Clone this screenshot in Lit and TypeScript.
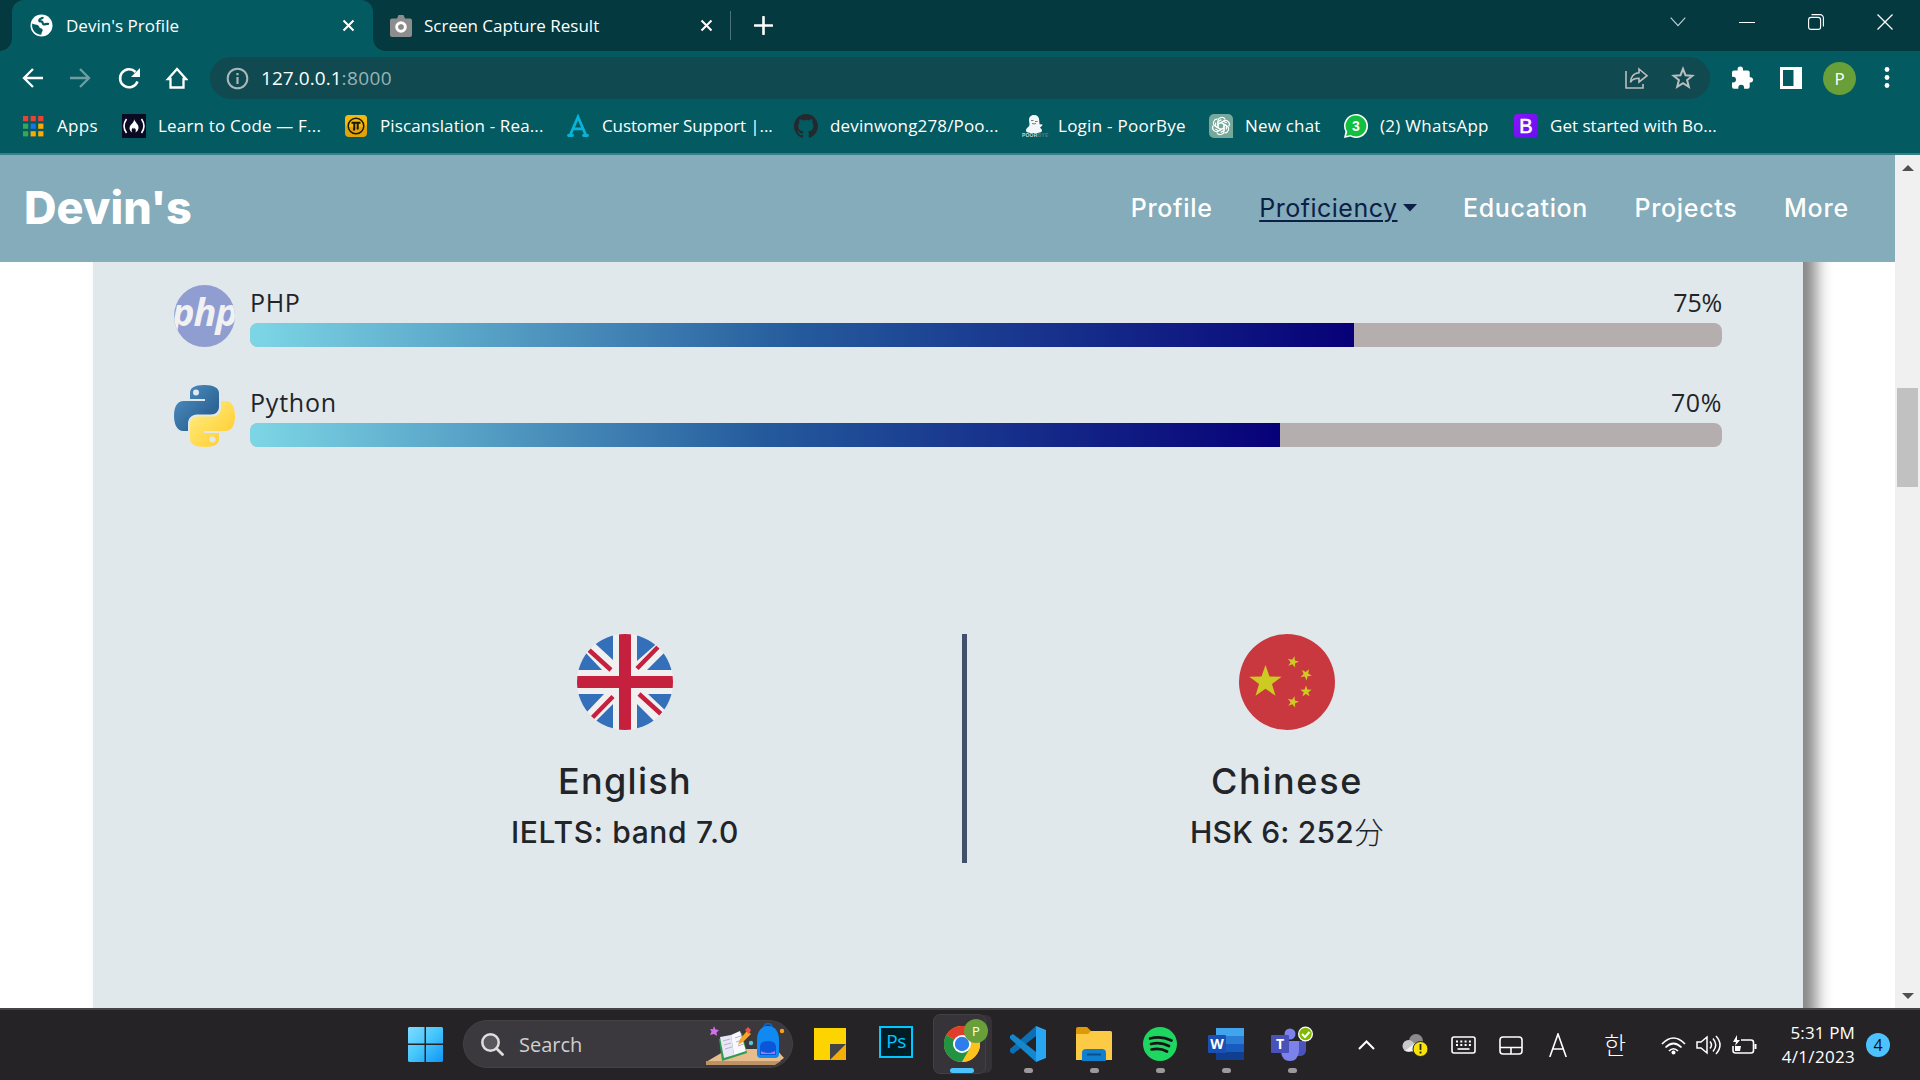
import { LitElement, html, css, svg } from "lit";
import { customElement, property } from "lit/decorators.js";

// Tracking per label, in px.
const SPACING: Record<string, number> = {
  "Devin's Profile": 0.03, "127.0.0.1": 0.05, ":8000": 0.4,
  Apps: 0.3, "Learn to Code — F...": 0.19, "Piscanslation - Rea...": 0.13, "Customer Support |...": -0.12,
  "devinwong278/Poo...": 0.15, "Login - PoorBye": 0.26, "New chat": 0.2, "(2) WhatsApp": 0.28, "Get started with Bo...": 0.02,
  Profile: 0.69, Proficiency: 0.5, Education: 0.62, Projects: 0.69, More: 0.8,
  PHP: 0.6, Python: 0.8, "75%": -0.2, "70%": 0.6,
  English: 1.3, "IELTS: band 7.0": 0.67, Chinese: 1.64, "HSK 6: 252": 0.2,
  "5:31 PM": 0.15, "4/1/2023": 0.3,
};

const t = (text: string, cls = "") =>
  html`<span class="t ${cls}" style="letter-spacing:${SPACING[text] ?? 0}px">${text}</span>`;

const icon = (w: number, h: number, body: unknown, vb = `0 0 ${w} ${h}`) =>
  html`<svg width=${w} height=${h} viewBox=${vb} fill="none">${body}</svg>`;

const star = (cx: number, cy: number, r: number, rot = 0) => {
  const pts = Array.from({ length: 10 }, (_, i) => {
    const a = ((i * 36 - 90 + rot) * Math.PI) / 180;
    const d = i % 2 ? r * 0.4 : r;
    return `${(cx + d * Math.cos(a)).toFixed(2)},${(cy + d * Math.sin(a)).toFixed(2)}`;
  }).join(" ");
  return svg`<polygon points=${pts} fill="#cdcb22"/>`;
};

const closeX = icon(13, 13, svg`<path d="M1.5 1.5 11.5 11.5M11.5 1.5 1.5 11.5" stroke="#fff" stroke-width="2"/>`);

const bookmarkIcons = {
  apps: icon(24, 24, [0, 1, 2].map((r) => [0, 1, 2].map((c) => {
    const col = [["#ea4335", "#ea4335", "#ea4335"], ["#34a853", "#1a73e8", "#fbab04"], ["#34a853", "#fbab04", "#fbab04"]][r][c];
    return svg`<rect x=${2 + c * 7.6} y=${2 + r * 7.6} width="5.2" height="5.2" fill=${col}/>`;
  }))),
  fcc: icon(24, 24, svg`<rect width="24" height="24" fill="#0a0a23"/><path d="M4.500 5Q-.5 12 4.500 19M19.500 5q5 7 0 14" stroke="#fff" stroke-width="1.600"/><path d="M12 5c.5 3 5 5 4.500 9-.3 2.600-1.800 3.800-3 4.500.8-2.500.2-3.500-1-4.500-.3 1.300-1.400 1-1.300-.6-2 1.500-2 3.600-.8 5.100-2-.8-3.200-2.800-2.800-5C8.200 10 12.500 9 12 5z" fill="#fff"/>`),
  pi: icon(24, 24, svg`<rect x="1" y="1" width="22" height="22" rx="4" fill="#e0a30b"/><rect x="1" y="1" width="22" height="12" rx="4" fill="#f4b90f"/><circle cx="12" cy="12" r="7.800" stroke="#1c1604" stroke-width="1.500"/><path d="M7.500 8.700h9M10.300 9v6.500M13.700 9v6.500M9 15.500h2" stroke="#1c1604" stroke-width="2"/>`),
  a: icon(24, 24, svg`<path d="M2.500 21.500h4M17.500 21.500h4M4.200 21 12 3l7.800 18M7 14.800h10" stroke="#06b4d8" stroke-width="2.800" stroke-linecap="round"/>`),
  git: icon(24, 24, svg`<path fill="#24292f" d="M12 0C5.370 0 0 5.500 0 12.200c0 5.400 3.400 10 8.200 11.600.6.100.8-.3.800-.6v-2.100c-3.300.7-4-1.600-4-1.600-.6-1.400-1.400-1.800-1.400-1.800-1-.7.1-.7.100-.7 1.200.1 1.800 1.200 1.800 1.200 1.100 1.900 2.800 1.300 3.500 1 .1-.8.400-1.300.8-1.600-2.700-.3-5.500-1.300-5.500-6 0-1.300.5-2.400 1.200-3.200-.1-.3-.5-1.600.1-3.200 0 0 1-.3 3.300 1.200a11 11 0 0 1 6 0c2.300-1.600 3.300-1.200 3.300-1.200.6 1.600.2 2.900.1 3.200.8.800 1.200 1.900 1.200 3.200 0 4.700-2.800 5.700-5.500 6 .5.4.8 1.100.8 2.200v3.400c0 .3.200.7.800.6A12.200 12.200 0 0 0 24 12.200C24 5.500 18.600 0 12 0z"/>`),
  bye: html`<div class="bye">${icon(24, 19, svg`<path d="M12 1c-3.500 0-5 2.500-5 5 0 2 .8 3.300.3 5.500C6.500 13.500 4 14 4 16.500 4 18.500 7 19 12 19s8-.5 8-2.500c0-1.800-1.500-2-2-3 1-.6 2.300-1.500 2.600-3l-3-.2C17.500 9 17.200 8 17.200 6c0-3-1.800-5-5.200-5z" fill="#f4f7f8"/><path d="M9 6.500h2.500M13 7.500h2.500M10 9.500q2 .8 4 0" stroke="#6a8085" stroke-width="1"/>`)}<i>POOR<b>BYE</b></i></div>`,
  gpt: icon(24, 24, svg`<path d="M5 0h14a5 5 0 0 1 5 5v19H5a5 5 0 0 1-5-5V5a5 5 0 0 1 5-5z" fill="#75a99c"/>${[0, 60, 120, 180, 240, 300].map((a) => svg`<path transform="rotate(${a} 12 12)" d="M9 13.800V7.300c0-4.400 6-5.200 7.200-1.700M9 10.200l5.300-3.100 3.400 2" stroke="#fff" stroke-width="1.200"/>`)}`),
  wa: html`<div class="wa">${icon(24, 24, svg`<path d="M12 0a12 12 0 1 1-5.600 22.600L0 24l1.400-6.400A12 12 0 0 1 12 0z" fill="#fff"/><path d="M12 1.600a10.400 10.400 0 1 1-5.400 19.300l-4.500 1.200 1.200-4.400A10.400 10.400 0 0 1 12 1.600z" fill="#12bf3f"/>`)}<b>3</b></div>`,
  bs: html`<div class="bs">B</div>`,
};

@customElement("browser-chrome")
export class BrowserChrome extends LitElement {
  static styles = css`
    :host { display: block; font-family: "Open Sans", "Noto Sans", sans-serif; color: #fff; font-size: 17px; }
    svg { display: block; flex: none; }
    .t { white-space: nowrap; }
    .tabs { height: 51px; background: #03393f; display: flex; align-items: center; padding-left: 12px; box-sizing: border-box; }
    .tab { height: 51px; width: 361px; box-sizing: border-box; padding: 0 18px; display: flex; align-items: center; gap: 13px; position: relative; }
    .tab .t { flex: 1; }
    .on { background: #045a61; border-radius: 12px 12px 0 0; }
    .on::before, .on::after { content: ""; position: absolute; bottom: 0; width: 12px; height: 12px; }
    .on::before { left: -12px; background: radial-gradient(circle at 0 0, transparent 11.500px, #045a61 12px); }
    .on::after { right: -12px; background: radial-gradient(circle at 100% 0, transparent 11.500px, #045a61 12px); }
    .off { width: 357px; padding: 0 17px; gap: 12px; }
    .sep { width: 1px; height: 29px; background: #4b7377; }
    .plus { margin-left: 23px; }
    .win { margin-left: auto; display: flex; gap: 53px; align-items: center; padding: 0 27px 8px 0; }
    .bar { height: 53px; background: #045a61; display: flex; align-items: center; box-sizing: border-box; padding: 1px 0 0 20px; }
    .nav { display: flex; gap: 24px; width: 190px; flex: none; }
    .omni { width: 1500px; flex: none; height: 42px; border-radius: 21px; background: #104950; display: flex; align-items: center; box-sizing: border-box; padding: 0 15px 0 16px; font-size: 19px; }
    .url { flex: 1; margin-left: 12px; white-space: nowrap; }
    .port { color: #9ab3b6; }
    .acts { display: flex; gap: 23px; }
    .ext { display: flex; align-items: center; flex: none; padding-left: 21px; gap: 24px; }
    .ava { width: 33px; height: 33px; flex: none; border-radius: 50%; background: #689f38; display: grid; place-items: center; font-size: 17px; margin-left: -4px; }
    .dots { margin-left: 2px; }
    .marks { height: 51px; box-sizing: border-box; background: #045a61; border-bottom: 2px solid #3a7f86; padding: 0 0 5px 21px; display: grid; align-items: center; grid-template-columns: 101px 222px 222px 228px 228px 187px 135px 170px 300px; }
    .mark { display: flex; align-items: center; gap: 12px; }
    .mark .t { margin-top: -2px; }
    .bye { width: 24px; height: 24px; }
    .bye i { display: block; font: 700 5px/5px "Liberation Sans", sans-serif; letter-spacing: 0.2px; color: #c6d6d8; white-space: nowrap; }
    .bye b { color: #5b7f84; }
    .wa { display: grid; width: 24px; height: 24px; place-items: center; }
    .wa > * { grid-area: 1 / 1; }
    .wa b { font: 700 14px "Liberation Sans", sans-serif; }
    .bs { width: 24px; height: 24px; border-radius: 4px; background: linear-gradient(135deg, #8a12fb, #6610f2); font: 400 20px/24px "Liberation Sans", sans-serif; -webkit-text-stroke: 0.6px #fff; text-align: center; }
  `;
  render() {
    const m = (k: keyof typeof bookmarkIcons, s: string) => html`<div class="mark">${bookmarkIcons[k]}${t(s)}</div>`;
    return html`
      <div class="tabs">
        <div class="tab on">
          ${icon(23, 23, svg`<circle cx="11.500" cy="11.500" r="11" fill="#fff"/><path d="M13 3.200c-.5 1.600-3.500 1-3.700 3-.1 1.700 1.800 1 2.800 1.500 1 .6 0 2.200 1.500 2.700 1.500.4 2.700-1.200 5.400-.4" stroke="#045a61" stroke-width="2.200"/><path d="M2.300 9.500c2.500 1.300 5.700.8 6.700 2.800.6 1.200.3 1.700 1.700 2 2.300.6 2.300 2 1.300 3.700-.6 1.100-.6 2-.7 2.800A9.300 9.300 0 0 1 2.300 9.500z" fill="#045a61"/>`)}
          ${t("Devin's Profile")}${closeX}
        </div>
        <div class="tab off">
          ${icon(22, 22, svg`<path d="M7 3.500 8.500 0h5L15 3.500h5a2 2 0 0 1 2 2V20a2 2 0 0 1-2 2H2a2 2 0 0 1-2-2V5.500a2 2 0 0 1 2-2z" fill="#8d8d8d"/><circle cx="11" cy="12" r="4.300" stroke="#fff" stroke-width="3"/><circle cx="11" cy="12" r="2.500" fill="#8a8a8a"/>`)}
          ${t("Screen Capture Result")}${closeX}
        </div>
        <div class="sep"></div>
        <div class="plus">${icon(19, 19, svg`<path d="M9.500 1v17M1 9.500h17" stroke="#fff" stroke-width="2.600" stroke-linecap="round"/>`)}</div>
        <div class="win">
          ${icon(16, 10, svg`<path d="m.7.700 7.300 8 7.300-8" stroke="#c5d3d4" stroke-width="1.100"/>`)}
          ${icon(16, 16, svg`<path d="M0 8.500h16" stroke="#fff"/>`)}
          ${icon(16, 16, svg`<rect x=".6" y="3.400" width="12" height="12" rx="2.500" stroke="#fff" stroke-width="1.100"/><path d="M3.500.6h8.500a3.300 3.300 0 0 1 3.400 3.400v8.500" stroke="#fff" stroke-width="1.100"/>`)}
          ${icon(16, 16, svg`<path d="m.5.500 15 15M15.500.500l-15 15" stroke="#fff" stroke-width="1.300"/>`)}
        </div>
      </div>
      <div class="bar">
        <div class="nav">
          ${icon(24, 24, svg`<path d="M23 12H5M13 3l-9 9 9 9" stroke="#fff" stroke-width="2.300"/>`)}
          ${icon(24, 24, svg`<path d="M2 12h18M12 3l9 9-9 9" stroke="#6e9ea2" stroke-width="2.300"/>`)}
          ${icon(24, 24, svg`<path d="M21.500 15.500A9 9 0 1 1 19.500 6" stroke="#fff" stroke-width="2.500"/><path d="M24 2v9h-9z" fill="#fff"/>`)}
          ${icon(24, 24, svg`<path d="M6.500 21.500V13H4l9-10 9 10h-2.500v8.500z" stroke="#fff" stroke-width="2.300"/>`)}
        </div>
        <div class="omni">
          ${icon(23, 23, svg`<circle cx="11.500" cy="11.500" r="9.800" stroke="#a9b8ba" stroke-width="2"/><path d="M11.500 10v7M11.500 6v2.300" stroke="#a9b8ba" stroke-width="2.200"/>`)}
          <span class="url">${t("127.0.0.1")}${t(":8000", "port")}</span>
          <div class="acts">
            ${icon(24, 24, svg`<path d="M2 5v17h17v-4" stroke="#b9bebf" stroke-width="1.600"/><path d="M15 3l8 6.700-8 6.300v-3.700c-4 0-7 1-8.500 4 0-5 3-9.300 8.500-9.600z" stroke="#b9bebf" stroke-width="1.600"/>`)}
            ${icon(24, 24, svg`<path d="m12 2.800 2.500 6.400 6.900.5-5.300 4.400 1.700 6.700L12 17.100l-5.800 3.700 1.700-6.700-5.300-4.400 6.900-.5z" stroke="#b9bebf" stroke-width="2"/>`)}
          </div>
        </div>
        <div class="ext">
          ${icon(24, 24, svg`<path d="M20 11.200h-1.300V6.400a2 2 0 0 0-2-2H12V3.200a2.700 2.700 0 0 0-5.400 0v1.200H3a2 2 0 0 0-2 2v4.300h1.100a2.900 2.900 0 0 1 0 5.800H1v4.300a2 2 0 0 0 2 2h4.300v-1.100a2.900 2.900 0 0 1 5.800 0v1.100h3.600a2 2 0 0 0 2-2v-4.300H20a2.700 2.700 0 0 0 0-5.300z" fill="#fff"/>`)}
          ${icon(24, 24, svg`<path d="M1 1h22v22H1zM4 4v16h10.500V4z" fill="#fff" fill-rule="evenodd"/>`)}
          <div class="ava">P</div>
          <div class="dots">${icon(10, 24, svg`<circle cx="5" cy="3.500" r="2.400" fill="#fff"/><circle cx="5" cy="11.500" r="2.400" fill="#fff"/><circle cx="5" cy="19.500" r="2.400" fill="#fff"/>`)}</div>
        </div>
      </div>
      <div class="marks">
        ${m("apps", "Apps")}${m("fcc", "Learn to Code — F...")}${m("pi", "Piscanslation - Rea...")}${m("a", "Customer Support |...")}
        ${m("git", "devinwong278/Poo...")}${m("bye", "Login - PoorBye")}${m("gpt", "New chat")}${m("wa", "(2) WhatsApp")}${m("bs", "Get started with Bo...")}
      </div>`;
  }
}

@customElement("skill-row")
export class SkillRow extends LitElement {
  @property() name = "";
  @property({ type: Number }) value = 0;
  static styles = css`
    :host { display: flex; gap: 15px; height: 62px; margin-bottom: 38px; font: 400 25px/34px "Open Sans", "Noto Sans", sans-serif; color: #212529; }
    .logo { width: 61px; height: 62px; flex: none; }
    .body { flex: 1; }
    .head { display: flex; justify-content: space-between; height: 38px; }
    .track { height: 24px; border-radius: 8px; background: #b4afae; overflow: hidden; }
    .fill { height: 100%; background: linear-gradient(to right, #7dd6e5, #245a9c 50%, #070078); }
  `;
  render() {
    return html`<div class="logo"><slot></slot></div>
      <div class="body">
        <div class="head">${t(this.name)}${t(this.value + "%")}</div>
        <div class="track"><div class="fill" style="width:${this.value}%"></div></div>
      </div>`;
  }
}

@customElement("profile-page")
export class ProfilePage extends LitElement {
  static styles = css`
    :host { display: grid; grid-template-columns: 1895px 25px; height: 853px; background: #fff; font-family: Inter, "Open Sans", sans-serif; color: #212529; }
    svg { display: block; }
    .t { white-space: nowrap; }
    .view { overflow: hidden; height: 853px; }
    .navbar { height: 107px; background: #84acba; display: flex; align-items: center; justify-content: space-between; box-sizing: border-box; padding: 0 46px 2px 24px; position: relative; z-index: 1; color: #fff; }
    .brand { font-size: 45px; font-weight: 800; }
    .links { display: flex; font-size: 25px; font-weight: 500; gap: 46.500px; }
    .drop { color: #0c2047; font-weight: 400; display: flex; align-items: center; gap: 5px; }
    .drop .t { text-decoration: underline; text-decoration-thickness: 2px; text-underline-offset: 3px; }
    .panel { height: 826px; width: 1710px; margin: -40px 0 0 93px; background: #e1e8eb; box-shadow: 13px 0 15px #858585; box-sizing: border-box; padding: 63px 81px 0; }
    .php { width: 61px; height: 62px; border-radius: 50%; overflow: hidden; background: #8f9dd1; color: #f1f1f2; font: italic 700 38px/53px "Open Sans", sans-serif; display: flex; justify-content: center; letter-spacing: -1px; }
    .langs { display: grid; grid-template-columns: 674px 5px 640px; margin: 187px 0 0 114px; height: 229px; }
    .lang { display: flex; flex-direction: column; align-items: center; }
    .rule { background: #41516a; }
    .name { font-size: 36px; line-height: 42px; margin-top: 30px; font-weight: 500; }
    .score { font-size: 30px; line-height: 36px; margin-top: 12px; font-weight: 500; display: flex; }
    .cjk { font-family: "Noto Sans CJK SC", sans-serif; font-weight: 300; margin-top: -2px; }
    .scroll { background: #f0f0f0; display: flex; flex-direction: column; align-items: center; box-sizing: border-box; padding: 10px 0 9px; }
    .thumb { width: 21px; height: 99px; background: #c1c1c1; margin: 217px 0 auto; }
  `;
  render() {
    const flagGB = icon(96, 96, svg`<defs><clipPath id="c"><circle cx="48" cy="48" r="48"/></clipPath></defs><g clip-path="url(#c)"><rect width="96" height="96" fill="#f1f0f1"/>
      <path fill="#3470ba" d="M36 0v26L17 8.500zM60 0v27L81 8.500zM0 36h25L8 18zM96 36H70L88 18zM0 60h27L8 80zM96 60H71L90 78zM36 96V70L18 88zM60 96V70L78 88z"/>
      <path fill="#c6203f" d="M42 0h12v42h42v12H54v42H42V54H0V42h42z"/><path d="M12 16 34 36M82 12 60 34.500M15 84 36 62.500M84 80 62 60" stroke="#c6203f" stroke-width="4.500"/></g>`);
    const flagCN = icon(96, 96, svg`<circle cx="48" cy="48" r="48" fill="#c9383f"/>${star(26.500, 48, 17)}${star(54, 28, 6, 15)}${star(67, 40.500, 6, 30)}${star(67, 57.500, 6)}${star(54, 68, 6, 15)}`);
    const python = icon(61, 62, svg`<defs><linearGradient id="b" x1="0" y1="0" x2="1" y2="1"><stop stop-color="#4f94c8"/><stop offset=".7" stop-color="#2f6596"/></linearGradient><linearGradient id="y" x1="0" y1="0" x2="1" y2="1"><stop offset=".2" stop-color="#ffe873"/><stop offset=".8" stop-color="#ffd13a"/></linearGradient></defs>
      <path fill="url(#b)" fill-rule="evenodd" d="M30.400 0C20 0 16 3 16 8v6h15v2H9.500C3.500 16 0 21.500 0 31s4 15 9 15h5v-7c0-6 4-9.500 9-9.500h14c5 0 8-3.500 8-8V8c0-5-5-8-14.600-8zM22 4.500a3 3 0 1 1 0 6 3 3 0 0 1 0-6z"/>
      <path fill="url(#y)" fill-rule="evenodd" d="M30.600 62C41 62 45 59 45 54v-6H30v-2h21.500C57.500 46 61 40.500 61 31s-4-15-9-15h-5v7c0 6-4 8.500-9 8.500H24c-5 0-8 3.500-8 8V54c0 5 5 8 14.600 8zM38.500 51.500a3 3 0 1 1 0 6 3 3 0 0 1 0-6z"/>`);
    return html`<div class="view">
        <div class="navbar">${t("Devin's", "brand")}
          <div class="links">${t("Profile")}<span class="drop">${t("Proficiency")}${icon(14, 8, svg`<path d="M0 0h14L7 7.500z" fill="#0c2047"/>`)}</span>${t("Education")}${t("Projects")}${t("More")}</div>
        </div>
        <div class="panel">
          <skill-row name="PHP" value="75"><div class="php">php</div></skill-row>
          <skill-row name="Python" value="70">${python}</skill-row>
          <div class="langs">
            <div class="lang">${flagGB}<div class="name">${t("English")}</div><div class="score">${t("IELTS: band 7.0")}</div></div>
            <div class="rule"></div>
            <div class="lang">${flagCN}<div class="name">${t("Chinese")}</div><div class="score">${t("HSK 6: 252")}<span class="cjk">分</span></div></div>
          </div>
        </div>
      </div>
      <div class="scroll">
        ${icon(12, 6, svg`<path d="m0 6 6-6 6 6z" fill="#505050"/>`)}
        <div class="thumb"></div>
        ${icon(12, 6, svg`<path d="m0 0 6 6 6-6z" fill="#505050"/>`)}
      </div>`;
  }
}

@customElement("task-bar")
export class TaskBar extends LitElement {
  static styles = css`
    :host { display: flex; align-items: center; height: 72px; box-sizing: border-box; border-top: 2px solid #444446; background: #262327; color: #fff; font-family: "Open Sans", "Noto Sans", sans-serif; padding: 0 10px 0 408px; }
    svg { display: block; }
    .t { white-space: nowrap; }
    .start { margin-top: -1px; }
    .search { margin: -2px 0 0 20px; width: 330px; height: 48px; border-radius: 24px; background: #3b393d; border: 1px solid #434145; box-sizing: border-box; display: flex; align-items: center; padding: 0 6px 0 17px; gap: 15px; font-size: 20px; color: #cfcfd0; }
    .search .art { margin-left: auto; }
    .apps { display: grid; grid-template-columns: repeat(8, 66px); margin-left: 4px; height: 70px; }
    .app { display: grid; grid-template-rows: 48px 5px; align-content: start; justify-items: center; align-items: center; padding-top: 10px; }
    .app i { width: 9px; height: 5px; border-radius: 3px; background: #9b999c; }
    .cur { position: relative; }
    .cur::before { content: ""; position: absolute; left: 4px; top: 4px; width: 51px; height: 58px; border: 1px solid #424045; border-radius: 7px; background: #363438; box-shadow: 7px 0 0 -1px #343236; }
    .cur > * { position: relative; }
    .cur i { width: 24px; background: #4cc2ff; }
    .ps { width: 34px; height: 32px; margin-top: -4px; box-sizing: border-box; border: 2px solid #00c8ff; background: #001d26; color: #00c8ff; font-size: 19px; line-height: 26px; text-align: center; letter-spacing: -0.500px; }
    .stack { display: grid; }
    .stack > * { grid-area: 1 / 1; }
    .chrome { width: 36px; height: 36px; }
    .pb { width: 24px; height: 24px; border-radius: 50%; background: #689f38; font-size: 13px; line-height: 24px; text-align: center; margin: -7px 0 0 20px; }
    .w { width: 18px; height: 18px; background: #1a4fb4; font: 700 14px/18px "Open Sans", sans-serif; text-align: center; margin-top: 7px; border-radius: 1px; }
    .tm { background: #4a51b8; margin-top: 9px; }
    .tray { display: grid; align-items: center; margin-left: auto; grid-template-columns: 44px 49px 48px 50px 55px 57px 35px 36px 37px 86px 55px; }
    .a { font-family: "Noto Sans CJK KR", sans-serif; font-weight: 300; font-size: 24px; line-height: 30px; margin-top: -3px; }
    .clock { font-size: 17px; line-height: 24px; text-align: right; display: grid; justify-items: end; }
    .n { width: 24px; height: 24px; border-radius: 50%; background: #4cc2ff; color: #111; font-size: 16px; line-height: 24px; text-align: center; margin-left: 11px; margin-top: -1px; }
  `;
  render() {
    const app = (body: unknown, run = true, cls = "") => html`<div class="app ${cls}">${body}${run ? html`<i></i>` : ""}</div>`;
    return html`
      <div class="start">${icon(35, 35, svg`<defs><linearGradient id="g" gradientUnits="userSpaceOnUse" x1="0" y1="0" x2="35" y2="35"><stop stop-color="#7fdcff"/><stop offset=".5" stop-color="#45c5fb"/><stop offset="1" stop-color="#1194f5"/></linearGradient></defs><path fill="url(#g)" d="M1 0h15.500v16.500H0V1zM18 0H34l1 1v15.500H18zM0 18h16.500V35H1l-1-1zM18 18H35V34l-1 1H18z"/>`)}</div>
      <div class="search">
        ${icon(23, 23, svg`<circle cx="9.500" cy="9.500" r="8.200" stroke="#dedede" stroke-width="2.500" fill="#59575b"/><path d="m15.500 15.500 6 6" stroke="#dedede" stroke-width="2.800" stroke-linecap="round"/>`)}
        ${t("Search")}
        <div class="art">${icon(80, 42, svg`<path d="M0 39 22 26h48l8 9-7 5z" fill="#e7bd8c"/><path d="M0 38h75l-6 4H0z" fill="#bd9266"/><path d="m13 16 23-6 5 20-25 8z" fill="#2f9b55"/><path d="m14 14 11-2 3 20-10 3z" fill="#e9e6f5"/><path d="m25 12 9-4 6 20-12 4z" fill="#f9f7ff"/><path d="m17 18 7-2m-6 6 7-2m-6 6 7-2m3-9 6-2m-5 6 6-2m-4 6 6-2" stroke="#b7b1cf" stroke-width="1"/><path d="m32 22 2-6 7-8 4 3-8 8z" fill="#f7a62b"/><path d="m39 7 3-3 3 3-2 4z" fill="#ee5146"/><path d="M8 3l1.500 3.500 3.500.5-2.500 2.500.5 3.500-3-2-4 1 1.500-3.500L4 6l3 .3z" fill="#d76df2"/><circle cx="45" cy="20" r="2.200" fill="#54c5d4"/><circle cx="76" cy="8" r="2.200" fill="#f5a316"/><path d="M58 5c0-6 8-6 8 0" stroke="#0d62c4" stroke-width="2"/><path d="M51 17C51 9 55 3 62 3s11 6 11 14v14q0 4-4 4H55q-4 0-4-4z" fill="#1089f3"/><path d="M54 24q0-6 8-6t8 6v8H54z" fill="#0b55d8"/><path d="M55 28q7 4 14 0v3H55z" fill="#a776f5"/>`)}</div>
      </div>
      <div class="apps">
        ${app(icon(32, 32, svg`<path d="M0 0h32v16L16 32H0z" fill="#fdd400"/><path d="M16 16h16L16 32z" fill="#444"/><path d="M32 16v16H16z" fill="#f4ae0a"/>`), false)}
        ${app(html`<div class="ps">Ps</div>`, false)}
        ${app(html`<div class="stack chrome">${icon(36, 36, svg`<circle cx="18" cy="18" r="18" fill="#fcc31e"/><path d="M18 18 2.400 9A18 18 0 0 1 33.600 9z" fill="#e33b2e"/><path d="M18 18 2.400 9A18 18 0 0 0 18 36l8-13z" fill="#229342"/><path d="M18 9h15.600A18 18 0 0 1 18 36l8-14z" fill="#fcc31e"/><circle cx="18" cy="18" r="9" fill="#fff"/><circle cx="18" cy="18" r="7.200" fill="#2f7ded"/>`)}<div class="pb">P</div></div>`, true, "cur")}
        ${app(icon(36, 36, svg`<path d="M26 0 0 23v3l3 2 23-18z" fill="#0b6fb5"/><path d="m26 36-26-23.500V10l3-2 23 18z" fill="#1487cf"/><path d="m26 0 10 4v28l-10 4z" fill="#29a5f2"/>`))}
        ${app(icon(36, 34, svg`<path d="M0 2q0-2 2-2h9l4 4h19q2 0 2 2v8H0z" fill="#dd9a07"/><path d="M0 7h12l3-3h19q2 0 2 2v27H0z" fill="#fdca45"/><path d="M6 34V26q0-4 4-4h16q4 0 4 4v8z" fill="#107fce"/><path d="M11 27.500h14" stroke="#0b4f8b" stroke-width="2"/>`))}
        ${app(icon(34, 34, svg`<circle cx="17" cy="17" r="17" fill="#1ed760"/><path d="M7 11.500q11-3 21.500 2M8 17q9.500-2.500 18 2M8.500 22.500q8.500-2 15.500 2" stroke="#161616" stroke-width="2.700" stroke-linecap="round"/>`))}
        ${app(html`<div class="stack">${icon(36, 32, svg`<path fill="#41a5ee" d="M8 0h28v8H8z"/><path fill="#2b7cd3" d="M8 8h28v8H8z"/><path fill="#185abd" d="M8 16h28v8H8z"/><path fill="#103f91" d="M8 24h28v8H8z"/>`)}<div class="w">W</div></div>`)}
        ${app(html`<div class="stack">${icon(42, 36, svg`<circle cx="19" cy="8" r="5.500" fill="#7b83eb"/><path d="M25 15h10v10q-1 5-6 5h-4z" fill="#4b53bc"/><path d="M10 15h18v10q-1 10-9 10t-9-9z" fill="#7b83eb"/><circle cx="34.500" cy="8" r="7.500" fill="#fff"/><circle cx="34.500" cy="8" r="6.200" fill="#7fba00"/><path d="m31 8 3 3 4.500-5" stroke="#fff" stroke-width="2"/>`)}<div class="w tm">T</div></div>`)}
      </div>
      <div class="tray">
        ${icon(17, 10, svg`<path d="m1 9 7.500-7.500L16 9" stroke="#fff" stroke-width="2"/>`)}
        ${icon(26, 24, svg`<circle cx="14" cy="8" r="7" fill="#8b8b8b"/><circle cx="6.500" cy="13" r="6" fill="#c9c9c9"/><path d="M3 18l10-8 6 9z" fill="#f3f3f3"/><circle cx="18.500" cy="16" r="7.500" fill="#fbe10a" stroke="#262327"/><path d="M18.500 11v6M18.500 18.500v2" stroke="#222" stroke-width="1.800"/>`)}
        ${icon(25, 18, svg`<rect x="1" y="1" width="23" height="16" rx="2" stroke="#fff" stroke-width="1.600"/><path d="M5 5.500h15M5 9h15" stroke="#fff" stroke-width="1.800" stroke-dasharray="2 2.300"/><path d="M6.500 13h12" stroke="#fff" stroke-width="1.600"/>`)}
        ${icon(24, 19, svg`<rect x="1" y="1" width="22" height="17" rx="3" stroke="#fff" stroke-width="1.600"/><path d="M1 11.500h22M12 11.500V18" stroke="#fff" stroke-width="1.600"/>`)}
        ${icon(18, 24, svg`<path d="M.8 24 9 1l8.200 23M3.500 16h11" stroke="#fff" stroke-width="1.600"/>`)}
        <span class="a">한</span>
        ${icon(25, 19, svg`<path d="M1 8q11.500-12 23 0M4.500 11.500q8-8 16 0M8 15q4.500-4.500 9 0" stroke="#fff" stroke-width="1.700"/><circle cx="12.500" cy="16.500" r="2" fill="#fff"/>`)}
        ${icon(25, 20, svg`<path d="M1 7h4l6-5v16l-6-5H1zM14 6.500q3 3.500 0 7M17 3.500q5.500 6.500 0 13M20 1q8 9 0 18" stroke="#fff" stroke-width="1.500"/>`)}
        ${icon(25, 21, svg`<path d="M9 5h10q2.500 0 2.500 2.500v8q0 2.500-2.500 2.500H3.500Q1 18 1 15.500V11" stroke="#fff" stroke-width="1.600"/><path d="M23.500 9v5" stroke="#fff" stroke-width="2"/><path d="M3 11h6l-1 5H3zM5 0 1 7h3L3 11l5-6H5z" fill="#fff"/>`)}
        <div class="clock">${t("5:31 PM")}${t("4/1/2023")}</div>
        <div class="n">4</div>
      </div>`;
  }
}

@customElement("app-root")
export class AppRoot extends LitElement {
  static styles = css`
    :host { display: block; width: 1920px; height: 1080px; overflow: hidden; }
  `;
  render() {
    return html`<browser-chrome></browser-chrome><profile-page></profile-page><task-bar></task-bar>`;
  }
}
